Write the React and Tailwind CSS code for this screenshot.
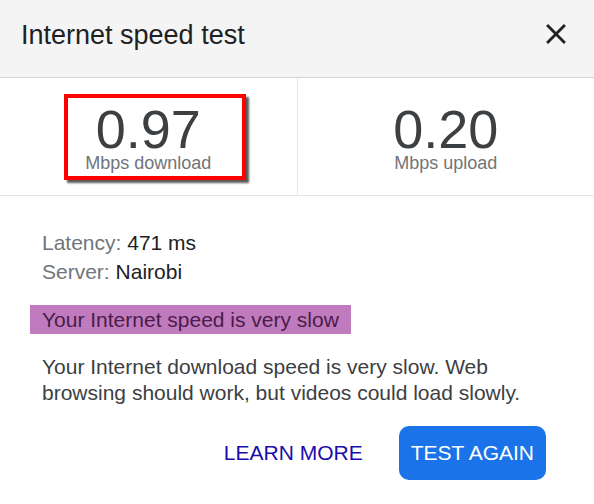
import React from 'react';

const CloseIcon = () => (
  <svg width="34" height="34" viewBox="0 0 24 24" className="-mt-[5px] text-[#202124]">
    <path
      fill="currentColor"
      d="M19 6.41L17.59 5 12 10.59 6.41 5 5 6.41 10.59 12 5 17.59 6.41 19 12 13.41 17.59 19 19 17.59 13.41 12z"
    />
  </svg>
);

const Stat = ({ value, label, highlighted, divider }) => (
  <div
    className={`relative flex-1 flex flex-col items-center pt-[26px] ${divider ? 'border-r border-[#e6e6e6]' : ''}`}
  >
    <div className="text-[54px] leading-[50px] text-[#3c4043]">{value}</div>
    <div className="mt-[1px] text-[18px] leading-[16px] text-[#70757a]">{label}</div>
    {highlighted && (
      <div className="absolute left-[64px] top-[16px] w-[182px] h-[86px] border-[4px] border-[#ff0000] shadow-[3px_3px_2px_rgba(0,0,0,0.65)]" />
    )}
  </div>
);

export default function App() {
  return (
    <div className="w-[594px] h-[504px] bg-white overflow-hidden font-['Liberation_Sans',Arial,sans-serif]">
      {/* header */}
      <div className="h-[78px] bg-[#f4f4f4] border-b border-[#d4d4d4] flex items-start justify-between pl-[21px] pr-[21px] pt-[22px]">
        <h1 className="text-[27px] leading-[27px] text-[#202124]">Internet speed test</h1>
        <CloseIcon />
      </div>

      {/* results */}
      <div className="h-[118px] flex border-b border-[#e6e6e6]">
        <Stat value="0.97" label="Mbps download" highlighted divider />
        <Stat value="0.20" label="Mbps upload" />
      </div>

      {/* details */}
      <div className="pl-[42px] pr-[48px] pt-[32px] text-[21px]">
        <div className="leading-[29px]">
          <p>
            <span className="text-[#70757a]">Latency: </span>
            <span className="text-[#202124]">471 ms</span>
          </p>
          <p>
            <span className="text-[#70757a]">Server: </span>
            <span className="text-[#202124]">Nairobi</span>
          </p>
        </div>
        <div className="mt-[19px] -ml-[12px] inline-block bg-[#bf7bbd] px-[12px] leading-[29px] text-[#4b1b4a]">
          Your Internet speed is very slow
        </div>
        <p className="mt-[18px] leading-[26px] text-[#3c4043]">
          Your Internet download speed is very slow. Web browsing should work, but videos could load slowly.
        </p>
      </div>

      <div className="mt-[20px] flex justify-end gap-[24px] pr-[48px]">
        <button className="h-[54px] px-[12px] text-[21px] leading-none text-[#1a0dab]">LEARN MORE</button>
        <button className="h-[54px] px-[12px] rounded-[10px] bg-[#1a73e8] text-[21px] leading-none text-white">
          TEST AGAIN
        </button>
      </div>
    </div>
  );
}
